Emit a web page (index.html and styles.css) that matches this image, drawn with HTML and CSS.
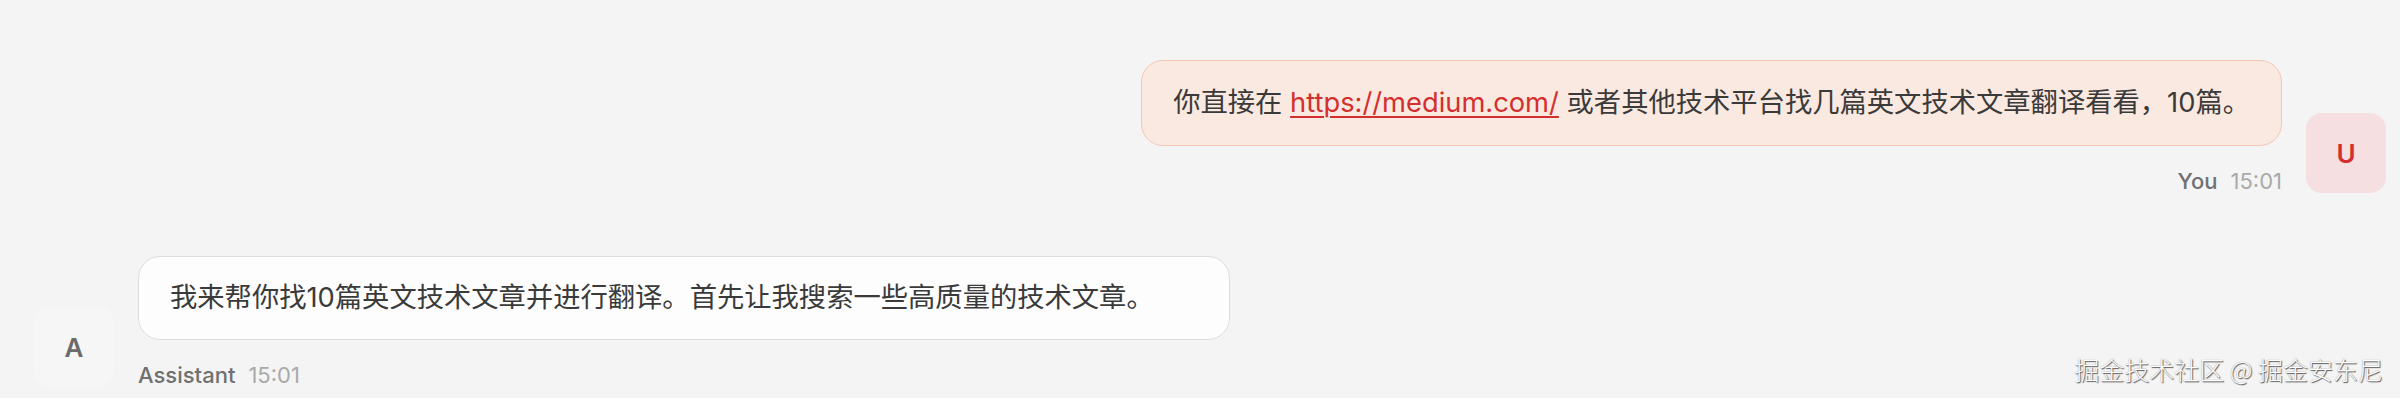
FILE: index.html
```html
<!DOCTYPE html>
<html lang="zh-CN">
<head>
<meta charset="utf-8">
<title>Chat</title>
<link rel="stylesheet" href="styles.css">
</head>
<body>
  <main class="chat">
    <div class="msg msg-user">
      <div class="msg-body">
        <div class="bubble bubble-user">你直接在 <a class="link" href="#">https://medium.com/</a> 或者其他技术平台找几篇英文技术文章翻译看看，10篇。</div>
        <div class="meta"><span class="meta-name">You</span><span class="meta-time">15:01</span></div>
      </div>
      <div class="avatar avatar-user">U</div>
    </div>
    <div class="msg msg-assistant">
      <div class="avatar avatar-assistant">A</div>
      <div class="msg-body">
        <div class="bubble bubble-assistant">我来帮你找10篇英文技术文章并进行翻译。首先让我搜索一些高质量的技术文章。</div>
        <div class="meta"><span class="meta-name">Assistant</span><span class="meta-time">15:01</span></div>
      </div>
    </div>
  </main>
  <div class="watermark">掘金技术社区 @ 掘金安东尼</div>
</body>
</html>
```
FILE: styles.css
```css
* { box-sizing: border-box; }
html, body {
  margin: 0;
  height: 100%;
}
body {
  background: #f4f4f4;
  font-family: Inter, "Noto Sans CJK SC", sans-serif;
  color: #3a3a3a;
  overflow: hidden;
  position: relative;
}
.chat {
  display: flex;
  flex-direction: column;
  gap: 63px;
  padding: 60px 14px 0 34px;
}
.msg {
  display: flex;
  align-items: flex-end;
  gap: 24px;
}
.msg-user { justify-content: flex-end; }
.msg-assistant { justify-content: flex-start; }
.msg-body {
  display: flex;
  flex-direction: column;
  gap: 23px;
}
.msg-user .msg-body { align-items: flex-end; }
.msg-assistant .msg-body { align-items: flex-start; }
.bubble {
  font-size: 27.3px;
  line-height: 42px;
  border-radius: 22px;
  border: 1px solid;
  white-space: nowrap;
}
.bubble-user {
  background: #fae9e0;
  border-color: #f4c6b4;
  padding: 21px 31px;
}
.bubble-assistant {
  background: #fdfdfd;
  border-color: #dddddd;
  padding: 20px 31px;
  min-width: 1092px;
}
.link {
  color: #d32f2f;
  text-decoration: underline;
  text-underline-offset: 4px;
  text-decoration-thickness: 2px;
}
.meta {
  display: flex;
  gap: 13px;
  font-size: 22px;
  line-height: 24px;
}
.meta-name {
  color: #707070;
  font-weight: 500;
}
.meta-time {
  color: #a9a9a9;
}
.avatar {
  width: 80px;
  height: 80px;
  border-radius: 16px;
  display: flex;
  align-items: center;
  justify-content: center;
  font-size: 26px;
  font-weight: 600;
  flex-shrink: 0;
}
.avatar-user {
  background: #f6dfe0;
  color: #d32f2f;
}
.avatar-assistant {
  background: #f6f6f6;
  color: #6b6b6b;
}
.watermark {
  position: absolute;
  right: 17px;
  bottom: 12px;
  font-family: "Noto Sans CJK SC", sans-serif;
  font-size: 25px;
  font-weight: 300;
  line-height: 34px;
  color: #ffffff;
  text-shadow: 1px 1px 1px #5a5a5a, 0 0 1px #888;
}
```
